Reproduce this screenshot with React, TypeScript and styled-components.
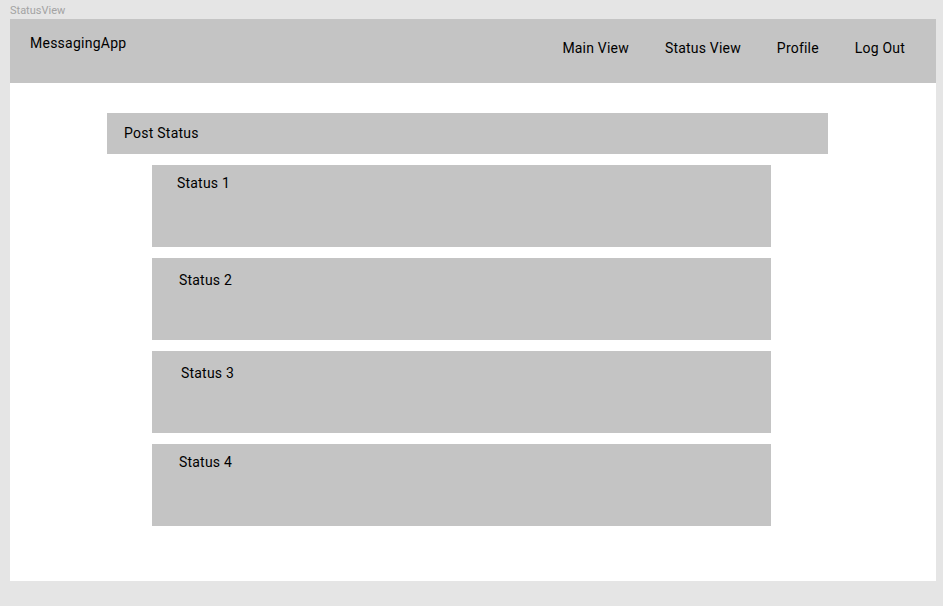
import React from 'react';
import styled, { createGlobalStyle } from 'styled-components';

const GlobalStyle = createGlobalStyle`
	html, body {
		margin: 0;
		padding: 0;
		background: #e5e5e5;
		font-family: Roboto, 'Liberation Sans', sans-serif;
	}
`;

const Canvas = styled.div`
	width: 943px;
	height: 606px;
	padding-left: 10px;
	box-sizing: border-box;
`;

const FrameLabel = styled.div`
	height: 19px;
	padding-top: 4px;
	box-sizing: border-box;
	font-size: 11px;
	line-height: 13px;
	color: #a3a3a3;
`;

const Frame = styled.div`
	width: 926px;
	height: 562px;
	background: #ffffff;
	display: flex;
	flex-direction: column;
`;

const Header = styled.header`
	height: 64px;
	background: #c4c4c4;
	display: flex;
	justify-content: space-between;
	align-items: flex-start;
	padding: 0 31px 0 20px;
	box-sizing: border-box;
`;

const Brand = styled.div`
	margin-top: 16px;
	font-size: 14px;
	line-height: 16px;
	letter-spacing: 0.25px;
	color: #000;
`;

const Nav = styled.nav`
	display: flex;
	gap: 36px;
	margin-top: 21px;
`;

const NavLink = styled.a`
	font-size: 14px;
	line-height: 16px;
	letter-spacing: 0.2px;
	color: #000;
	text-decoration: none;
	cursor: pointer;
`;

const Content = styled.main`
	display: flex;
	flex-direction: column;
	padding-top: 30px;
`;

const PostBar = styled.div`
	width: 721px;
	height: 41px;
	margin-left: 97px;
	background: #c4c4c4;
	display: flex;
	align-items: center;
	padding: 0 0 2px 17px;
	box-sizing: border-box;
	font-size: 14px;
	line-height: 16px;
	letter-spacing: 0.25px;
	color: #000;
`;

const StatusList = styled.div`
	display: flex;
	flex-direction: column;
	gap: 11px;
	margin: 11px 0 0 142px;
`;

const StatusCard = styled.div<{ $left: number; $top: number }>`
	width: 619px;
	height: 82px;
	background: #c4c4c4;
	padding: ${({ $top, $left }) => `${$top}px 0 0 ${$left}px`};
	box-sizing: border-box;
	font-size: 14px;
	line-height: 16px;
	letter-spacing: 0.2px;
	color: #000;
`;

const statuses = [
	{ label: 'Status 1', left: 25, top: 10 },
	{ label: 'Status 2', left: 27, top: 14 },
	{ label: 'Status 3', left: 29, top: 14 },
	{ label: 'Status 4', left: 27, top: 10 },
];

export default function App() {
	return (
		<>
			<GlobalStyle />
			<Canvas>
				<FrameLabel>StatusView</FrameLabel>
				<Frame>
					<Header>
						<Brand>MessagingApp</Brand>
						<Nav>
							<NavLink>Main View</NavLink>
							<NavLink>Status View</NavLink>
							<NavLink>Profile</NavLink>
							<NavLink>Log Out</NavLink>
						</Nav>
					</Header>
					<Content>
						<PostBar>Post Status</PostBar>
						<StatusList>
							{statuses.map((s) => (
								<StatusCard key={s.label} $left={s.left} $top={s.top}>
									{s.label}
								</StatusCard>
							))}
						</StatusList>
					</Content>
				</Frame>
			</Canvas>
		</>
	);
}
